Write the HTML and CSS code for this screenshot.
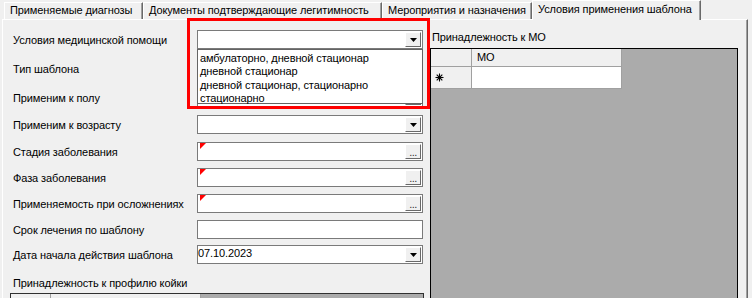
FILE: index.html
```html
<!DOCTYPE html>
<html lang="ru">
<head>
<meta charset="utf-8">
<link rel="stylesheet" href="styles.css">
</head>
<body>
<div class="tabs">
  <div class="tab t1">Применяемые диагнозы</div>
  <div class="tab t2">Документы подтверждающие легитимность</div>
  <div class="tab t3">Мероприятия и назначения</div>
  <div class="tab t4 active">Условия применения шаблона</div>
</div>
<div class="panel">
  <div class="form">
    <div class="row"><span class="lbl">Условия медицинской помощи</span><div class="ctl combo"><span class="val"></span><span class="btn"><svg width="7" height="4" viewBox="0 0 7 4"><polygon points="0,0 7,0 3.5,4" fill="#000"/></svg></span></div></div>
    <div class="row"><span class="lbl">Тип шаблона</span><div class="ctl combo"><span class="val"></span><span class="btn"><svg width="7" height="4" viewBox="0 0 7 4"><polygon points="0,0 7,0 3.5,4" fill="#000"/></svg></span></div></div>
    <div class="row"><span class="lbl">Применим к полу</span><div class="ctl combo"><span class="val"></span><span class="btn"><svg width="7" height="4" viewBox="0 0 7 4"><polygon points="0,0 7,0 3.5,4" fill="#000"/></svg></span></div></div>
    <div class="row"><span class="lbl">Применим к возрасту</span><div class="ctl combo"><span class="val"></span><span class="btn"><svg width="7" height="4" viewBox="0 0 7 4"><polygon points="0,0 7,0 3.5,4" fill="#000"/></svg></span></div></div>
    <div class="row"><span class="lbl">Стадия заболевания</span><div class="ctl combo"><span class="flag"></span><span class="val"></span><span class="btn dots">...</span></div></div>
    <div class="row"><span class="lbl">Фаза заболевания</span><div class="ctl combo"><span class="flag"></span><span class="val"></span><span class="btn dots">...</span></div></div>
    <div class="row"><span class="lbl">Применяемость при осложнениях</span><div class="ctl combo"><span class="flag"></span><span class="val"></span><span class="btn dots">...</span></div></div>
    <div class="row"><span class="lbl">Срок лечения по шаблону</span><div class="ctl combo"><span class="val"></span></div></div>
    <div class="row"><span class="lbl">Дата начала действия шаблона</span><div class="ctl combo"><span class="val date">07.10.2023</span><span class="btn"><svg width="7" height="4" viewBox="0 0 7 4"><polygon points="0,0 7,0 3.5,4" fill="#000"/></svg></span></div></div>
    <div class="caption left-cap">Принадлежность к профилю койки</div>
    <div class="mini-grid">
      <span class="mg-cell mg-rh"></span><span class="mg-cell mg-col"></span>
    </div>
  </div>
  <div class="right">
    <div class="caption">Принадлежность к МО</div>
    <div class="dgv">
      <div class="dgv-rows">
        <div class="hc rh"></div>
        <div class="hc colh">МО</div>
        <div class="hc rh newrow">
          <svg width="9" height="9" viewBox="0 0 9 9"><g stroke="#000" stroke-width="1.1"><line x1="4.5" y1="0.5" x2="4.5" y2="8.5"/><line x1="0.5" y1="4.5" x2="8.5" y2="4.5"/><line x1="1.7" y1="1.7" x2="7.3" y2="7.3"/><line x1="7.3" y1="1.7" x2="1.7" y2="7.3"/></g></svg>
        </div>
        <div class="cell"></div>
      </div>
    </div>
  </div>
  <div class="droplist">
    <div class="item">амбулаторно, дневной стационар</div>
    <div class="item">дневной стационар</div>
    <div class="item">дневной стационар, стационарно</div>
    <div class="item">стационарно</div>
  </div>
  <div class="annot"></div>
</div>
</body>
</html>
```

FILE: styles.css
```css
html, body {
  margin: 0;
  padding: 0;
}
body {
  width: 752px;
  height: 298px;
  overflow: hidden;
  background: #f0f0f0;
  font-family: "Liberation Sans", Arial, sans-serif;
  font-size: 11px;
  letter-spacing: -0.1px;
  color: #000;
}

/* Tabs */
.tabs {
  display: flex;
  align-items: flex-start;
  height: 19px;
  padding-left: 4px;
}
.tab {
  box-sizing: border-box;
  height: 17px;
  margin-top: 2px;
  padding-left: 5px;
  line-height: 15px;
  white-space: nowrap;
  background: #f0f0f0;
  border-top: 1px solid #fff;
  border-left: 1px solid #fff;
  border-right: 1px solid #696969;
  box-shadow: inset -1px 0 #a0a0a0;
}
.t1 { width: 139px; }
.t2 { width: 239px; }
.t3 { width: 150px; }
.t4 { width: 169px; }
.tab.active {
  height: 20px;
  margin-top: 0;
  line-height: 17px;
  position: relative;
  z-index: 2;
}

/* Panel */
.panel {
  position: relative;
  display: flex;
  height: 278px;
  margin: 0 4px 0 2px;
  border-top: 1px solid #fff;
  border-left: 1px solid #fff;
  border-right: 1px solid #696969;
  box-shadow: inset -1px 0 #a0a0a0;
}
.form {
  box-sizing: border-box;
  width: 427px;
  height: 278px;
  padding: 10px 0 0 7px;
  display: grid;
  grid-template-rows: 29px 29px 27px 27px 26px 26px 26px 25px 31px 17px 5px;
  align-items: start;
}
.row {
  display: flex;
  align-items: center;
  height: 19px;
}
.lbl {
  box-sizing: border-box;
  width: 187px;
  padding-left: 3px;
  white-space: nowrap;
}
.combo {
  box-sizing: border-box;
  width: 226px;
  height: 19px;
  display: flex;
  align-items: stretch;
  background: #fff;
  border: 1px solid #7a7a7a;
}
.val {
  flex: 1;
}
.val.date {
  line-height: 14px;
}
.btn {
  box-sizing: border-box;
  width: 16px;
  margin: 1px;
  display: flex;
  align-items: center;
  justify-content: center;
  background: #f0f0f0;
  border-top: 1px solid #fff;
  border-left: 1px solid #fff;
  border-right: 1px solid #696969;
  border-bottom: 1px solid #696969;
}
.btn.dots {
  align-items: flex-end;
  font-size: 11px;
  line-height: 11px;
  letter-spacing: -0.5px;
  color: #333;
}
.flag {
  align-self: flex-start;
  width: 0;
  height: 0;
  margin: 0 0 0 2px;
  border-top: 6px solid #ff0000;
  border-right: 6px solid transparent;
}
.caption {
  line-height: 15px;
  white-space: nowrap;
}
.left-cap {
  padding-left: 3px;
}
.mini-grid {
  box-sizing: border-box;
  width: 414px;
  height: 5px;
  overflow: hidden;
  background: #ababab;
  border: 1px solid #303030;
  border-bottom: none;
  display: flex;
  align-items: flex-start;
}
.mg-cell {
  display: block;
  height: 18px;
  background: #f0f0f0;
  border-right: 1px solid #a0a0a0;
}
.mg-rh { width: 39px; }
.mg-col { width: 149px; }

/* Right grid */
.right {
  padding-top: 10px;
}
.right .caption {
  padding-left: 2px;
  line-height: 14px;
}
.dgv {
  box-sizing: border-box;
  width: 308px;
  height: 250px;
  margin-top: 4px;
  background: #ababab;
  border: 1px solid #000;
  border-bottom: none;
}
.dgv-rows {
  display: grid;
  grid-template-columns: 41px 150px;
  grid-template-rows: 18px 22px;
}
.hc, .cell {
  box-sizing: border-box;
  border-right: 1px solid #a0a0a0;
  border-bottom: 1px solid #a0a0a0;
}
.hc {
  background: #f0f0f0;
}
.colh {
  padding-left: 5px;
  line-height: 16px;
}
.newrow {
  display: flex;
  align-items: center;
  padding-left: 4px;
}
.cell {
  background: #fff;
}

/* Overlays */
.droplist {
  position: absolute;
  left: 194px;
  top: 29px;
  box-sizing: border-box;
  width: 226px;
  height: 55px;
  padding: 2px 0 0 2px;
  background: #fff;
  border: 1px solid #646464;
  z-index: 3;
}
.item {
  line-height: 13.3px;
  white-space: nowrap;
}
.annot {
  position: absolute;
  left: 184px;
  top: -2px;
  width: 237px;
  height: 85px;
  border: 3px solid #ff0000;
  z-index: 4;
}
```
